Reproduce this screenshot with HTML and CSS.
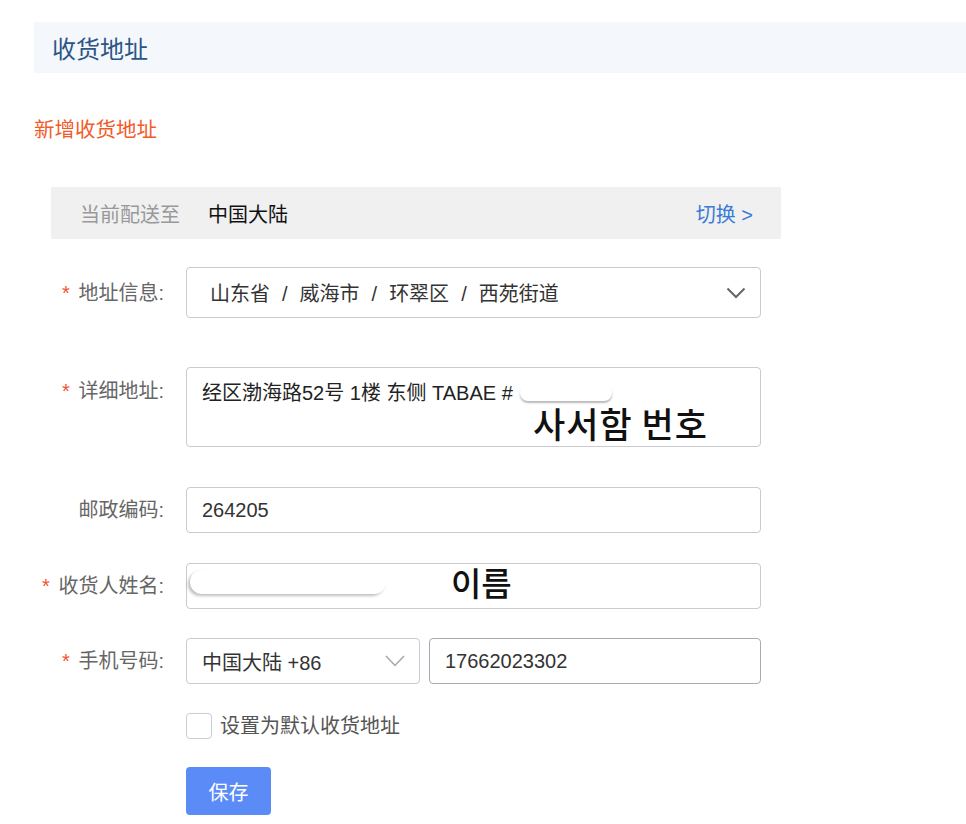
FILE: index.html
```html
<!DOCTYPE html>
<html lang="zh-CN">
<head>
<meta charset="utf-8">
<title>收货地址</title>
<link rel="stylesheet" href="styles.css">
</head>
<body>
<div class="page">
  <div class="header">收货地址</div>
  <div class="add-link">新增收货地址</div>

  <div class="form">
    <div class="ship-bar">
      <span class="ship-label">当前配送至</span>
      <span class="ship-value">中国大陆</span>
      <span class="ship-switch">切换 &gt;</span>
    </div>

    <div class="row row-region">
      <div class="label"><span class="req">*</span> 地址信息:</div>
      <div class="field select">
        <span class="region">山东省<span class="sep">/</span>威海市<span class="sep">/</span>环翠区<span class="sep">/</span>西苑街道</span>
        <svg class="chev" width="20" height="12" viewBox="0 0 20 12"><path d="M1.5 1.5 L10 10 L18.5 1.5" fill="none" stroke="#666" stroke-width="2"/></svg>
      </div>
    </div>

    <div class="row row-detail">
      <div class="label"><span class="req">*</span> 详细地址:</div>
      <div class="field textarea">
        <span class="detail-text">经区渤海路52号 1楼 东侧 TABAE #</span>
        <span class="smudge smudge-detail"></span>
        <span class="note note-detail">사서함 번호</span>
      </div>
    </div>

    <div class="row row-zip">
      <div class="label">邮政编码:</div>
      <div class="field input">264205</div>
    </div>

    <div class="row row-name">
      <div class="label"><span class="req">*</span> 收货人姓名:</div>
      <div class="field input">
        <span class="smudge smudge-name"></span>
        <span class="note note-name">이름</span>
      </div>
    </div>

    <div class="row row-phone">
      <div class="label"><span class="req">*</span> 手机号码:</div>
      <div class="phone">
        <div class="field country">
          <span>中国大陆 +86</span>
          <svg class="chev2" width="20" height="12" viewBox="0 0 20 12"><path d="M1 1 L10 10.5 L19 1" fill="none" stroke="#a6a6ad" stroke-width="1.5"/></svg>
        </div>
        <div class="field number">17662023302</div>
      </div>
    </div>

    <div class="row row-check">
      <div class="label"></div>
      <div class="check">
        <span class="box"></span>
        <span class="check-text">设置为默认收货地址</span>
      </div>
    </div>

    <div class="row row-btn">
      <div class="label"></div>
      <div><button class="save">保存</button></div>
    </div>
  </div>
</div>
</body>
</html>
```

FILE: styles.css
```css
* { box-sizing: border-box; }
html, body { margin: 0; padding: 0; background: #fff; }
body {
  font-family: "Liberation Sans", "Noto Sans CJK SC", sans-serif;
  font-size: 20px;
  color: #333;
}
.page { padding: 22px 0 0 34px; }

.header {
  height: 51px;
  background: #f4f7fb;
  padding-left: 18px;
  display: flex;
  align-items: center;
  font-size: 24px;
  color: #2b5585;
}

.add-link {
  margin-top: 43px;
  line-height: 28px;
  color: #f25a2a;
  font-size: 20.5px;
}

.form {
  margin-left: 17px;
  width: 730px;
  margin-top: 43px;
}

.ship-bar {
  height: 52px;
  background: #f0f0f0;
  display: flex;
  align-items: center;
  padding: 0 28px 0 29px;
}
.ship-label { color: #999; }
.ship-value { color: #111; margin-left: 28px; }
.ship-switch { margin-left: auto; color: #3a7bd8; }

.row {
  display: grid;
  grid-template-columns: 130px 575px;
  column-gap: 22px;
  align-items: center;
  margin-left: -17px;
}
.label {
  text-align: right;
  color: #666;
  line-height: 28px;
  white-space: nowrap;
}
.req { color: #f4522f; margin-right: 3px; }

.field {
  border: 1px solid #c9cad2;
  border-radius: 4px;
  background: #fff;
  position: relative;
  display: flex;
  align-items: center;
}

.row-region { margin-top: 28px; }
.select { height: 51px; padding-left: 23px; color: #333; }
.sep { margin: 0 12px; }
.chev { margin-left: auto; margin-right: 14px; }

.row-detail { margin-top: 49px; align-items: start; }
.row-detail .label { padding-top: 10px; }
.textarea {
  height: 80px;
  align-items: flex-start;
  padding: 11px 15px 0;
  line-height: 28px;
  color: #222;
}

.smudge {
  position: absolute;
  background: #fff;
  border-radius: 12px;
}
.smudge-detail {
  left: 333px;
  top: 17px;
  width: 92px;
  height: 16px;
  box-shadow: 0 2px 2px rgba(0, 0, 0, 0.28);
}
.smudge-name {
  left: 3px;
  top: 6px;
  width: 196px;
  height: 24px;
  box-shadow: -2px 2px 3px rgba(0, 0, 0, 0.25);
}
.note {
  position: absolute;
  font-family: "Noto Sans CJK KR", sans-serif;
  font-weight: 500;
  color: #111;
  line-height: 1;
}
.note-detail { left: 346px; top: 37px; font-size: 35px; letter-spacing: 1px; }
.note-name { left: 264px; top: 2px; font-size: 33px; }

.row-zip { margin-top: 40px; }
.input { height: 46px; padding-left: 15px; color: #333; }

.row-name { margin-top: 30px; }

.row-phone { margin-top: 29px; }
.phone { display: flex; gap: 9px; }
.country { width: 234px; height: 46px; padding-left: 15px; }
.chev2 { margin-left: auto; margin-right: 14px; }
.number {
  width: 332px;
  height: 46px;
  padding-left: 15px;
  border-color: #a9aab2;
}

.row-check { margin-top: 29px; }
.check { display: flex; align-items: center; }
.box {
  width: 26px;
  height: 26px;
  border: 1px solid #c9ccd6;
  border-radius: 4px;
  background: #fff;
}
.check-text { margin-left: 8px; color: #555; line-height: 26px; }

.row-btn { margin-top: 28px; }
.save {
  width: 85px;
  height: 48px;
  border: none;
  border-radius: 4px;
  background: #5b8bf6;
  color: #fff;
  font-family: "Liberation Sans", "Noto Sans CJK SC", sans-serif;
  font-size: 20px;
  padding: 0;
}
```
